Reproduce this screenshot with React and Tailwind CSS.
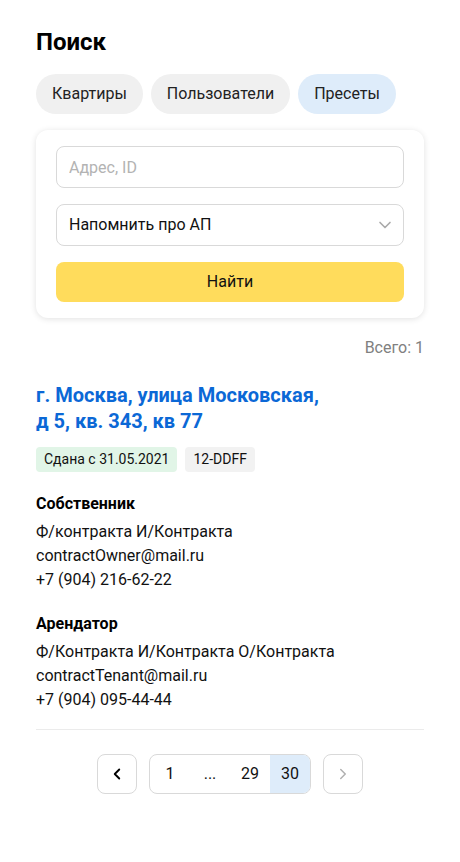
import { ChevronDown, ChevronLeft, ChevronRight } from "lucide-react";

const tabs = [
  { label: "Квартиры", active: false },
  { label: "Пользователи", active: false },
  { label: "Пресеты", active: true },
];

function Person({ title, lines }) {
  return (
    <div>
      <div className="text-[16px] font-bold leading-6 text-black">{title}</div>
      <div className="mt-1 text-[16px] leading-6 text-[#111]">
        {lines.map((l) => (
          <div key={l}>{l}</div>
        ))}
      </div>
    </div>
  );
}

export default function App() {
  return (
    <div className="min-h-[862px] bg-white px-9 pt-7 font-['Roboto',sans-serif] text-[#111]">
      <h1 className="text-[24px] font-bold leading-7 text-black">Поиск</h1>

      <div className="mt-[18px] flex gap-2">
        {tabs.map((t) => (
          <button
            key={t.label}
            className={
              "h-10 rounded-full px-4 text-[16px] text-[#222] " +
              (t.active ? "bg-[#deecfa]" : "bg-[#f0f0f0]")
            }
          >
            {t.label}
          </button>
        ))}
      </div>

      <div className="mt-4 flex flex-col gap-4 rounded-xl bg-white px-5 py-4 shadow-[0_1px_6px_rgba(0,0,0,0.12)]">
        <input
          placeholder="Адрес, ID"
          className="h-[42px] w-full rounded-lg border border-[#d9d9d9] px-3 text-[16px] outline-none placeholder:text-[#b3b3b3]"
        />
        <div className="flex h-[42px] items-center justify-between rounded-lg border border-[#d9d9d9] pl-3 pr-2">
          <span className="text-[16px] text-[#111]">Напомнить про АП</span>
          <ChevronDown size={20} strokeWidth={2} className="text-[#aaa]" />
        </div>
        <button className="h-10 w-full rounded-lg bg-[#ffdc5c] text-[16px] text-[#111]">Найти</button>
      </div>

      <div className="mt-[18px] text-right text-[16px] text-[#808080]">Всего: 1</div>

      <a href="#" className="mt-[22px] block text-[20px] font-bold leading-[26px] text-[#0b68d6]">
        г. Москва, улица Московская,
        <br />д 5, кв. 343, кв 77
      </a>

      <div className="mt-[13px] flex gap-2">
        <span className="rounded bg-[#e1f5e7] px-2 py-[3px] text-[14px] leading-[19px]">Сдана с 31.05.2021</span>
        <span className="rounded bg-[#f2f2f2] px-2 py-[3px] text-[14px] leading-[19px]">12-DDFF</span>
      </div>

      <div className="mt-5 flex flex-col gap-5">
        <Person
          title="Собственник"
          lines={["Ф/контракта И/Контракта", "contractOwner@mail.ru", "+7 (904) 216-62-22"]}
        />
        <Person
          title="Арендатор"
          lines={["Ф/Контракта И/Контракта О/Контракта", "contractTenant@mail.ru", "+7 (904) 095-44-44"]}
        />
      </div>

      <div className="mt-[17px] border-t border-[#ebebeb]" />

      <div className="mt-6 flex justify-center gap-3">
        <button className="flex h-10 w-10 items-center justify-center rounded-lg border border-[#d9d9d9] text-black">
          <ChevronLeft size={18} strokeWidth={2.5} />
        </button>
        <div className="flex h-10 overflow-hidden rounded-lg border border-[#d9d9d9] text-[16px]">
          <span className="flex w-10 items-center justify-center">1</span>
          <span className="flex w-10 items-center justify-center">...</span>
          <span className="flex w-10 items-center justify-center">29</span>
          <span className="flex w-10 items-center justify-center bg-[#deecfa]">30</span>
        </div>
        <button className="flex h-10 w-10 items-center justify-center rounded-lg border border-[#d9d9d9] text-[#b0b0b0]">
          <ChevronRight size={18} strokeWidth={2} />
        </button>
      </div>
    </div>
  );
}
